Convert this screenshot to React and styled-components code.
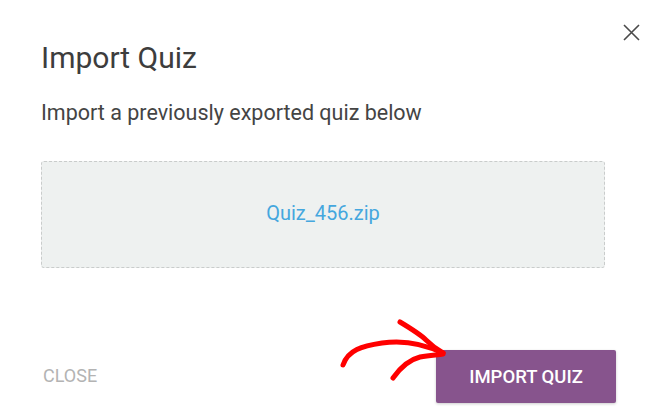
import React from 'react'
import styled, { createGlobalStyle } from 'styled-components'

const Global = createGlobalStyle`
    html, body {
        margin: 0;
        padding: 0;
        background: #ffffff;
    }
    body {
        font-family: Roboto, "Liberation Sans", sans-serif;
    }
`

const Dialog = styled.div`
    position: relative;
    width: 653px;
    height: 414px;
    box-sizing: border-box;
    padding: 41px 48px 0 41px;
    display: flex;
    flex-direction: column;
    background: #fff;
    overflow: hidden;
`

const CloseX = styled.button`
    position: absolute;
    top: 22px;
    right: 12px;
    width: 20px;
    height: 20px;
    padding: 0;
    border: none;
    background: transparent;
    cursor: pointer;
    display: flex;
    align-items: center;
    justify-content: center;
    color: #4a4a4a;
`

const Title = styled.h2`
    margin: 0;
    font-size: 30px;
    line-height: 34px;
    font-weight: 400;
    color: #3d3d3d;
`

const Lead = styled.p`
    margin: 25px 0 0;
    font-size: 21.5px;
    line-height: 25px;
    color: #444;
`

const DropZone = styled.div`
    margin-top: 36px;
    height: 107px;
    box-sizing: border-box;
    border: 1px dashed #c9cccb;
    border-radius: 3px;
    background: #eef1f0;
    display: flex;
    align-items: center;
    justify-content: center;
`

const FileName = styled.span`
    font-size: 20px;
    color: #45a7de;
    margin-top: -4px;
`

const Footer = styled.div`
    margin-top: 82px;
    display: flex;
    align-items: center;
    justify-content: space-between;
    margin-right: -11px;
`

const TextButton = styled.button`
    border: none;
    background: transparent;
    padding: 0 0 0 2px;
    margin-top: -2px;
    font-family: inherit;
    font-size: 18px;
    font-weight: 400;
    color: #b3b3b3;
    cursor: pointer;
`

const PrimaryButton = styled.button`
    width: 180px;
    height: 53px;
    border: none;
    border-radius: 2px;
    background: #87548d;
    color: #fff;
    font-family: inherit;
    font-size: 18.5px;
    font-weight: 500;
    box-shadow: 0 1px 3px rgba(0, 0, 0, 0.2);
    cursor: pointer;
`

const Arrow = styled.svg`
    position: absolute;
    left: 330px;
    top: 310px;
    pointer-events: none;
`

export default function App() {
    return (
        <>
            <Global />
            <Dialog>
                <CloseX aria-label="Close">
                    <svg width="17" height="17" viewBox="0 0 17 17">
                        <path d="M1 1 L16 16 M16 1 L1 16" stroke="currentColor" strokeWidth="1.6" fill="none" />
                    </svg>
                </CloseX>
                <Title>Import Quiz</Title>
                <Lead>Import a previously exported quiz below</Lead>
                <DropZone>
                    <FileName>Quiz_456.zip</FileName>
                </DropZone>
                <Footer>
                    <TextButton>CLOSE</TextButton>
                    <PrimaryButton>IMPORT QUIZ</PrimaryButton>
                </Footer>
                <Arrow width="130" height="80" viewBox="0 0 130 80">
                    <g fill="none" stroke="#ff0000" strokeWidth="5" strokeLinecap="round" strokeLinejoin="round">
                        <path d="M13 55 C 18 40, 32 36, 52 33 C 72 30, 92 33, 113 43" />
                        <path d="M70 12 C 80 18, 90 24, 96 30 C 102 36, 108 40, 113 43" />
                        <path d="M63 68 C 70 58, 78 50, 90 47 C 100 45, 108 45, 113 44" />
                    </g>
                </Arrow>
            </Dialog>
        </>
    )
}
